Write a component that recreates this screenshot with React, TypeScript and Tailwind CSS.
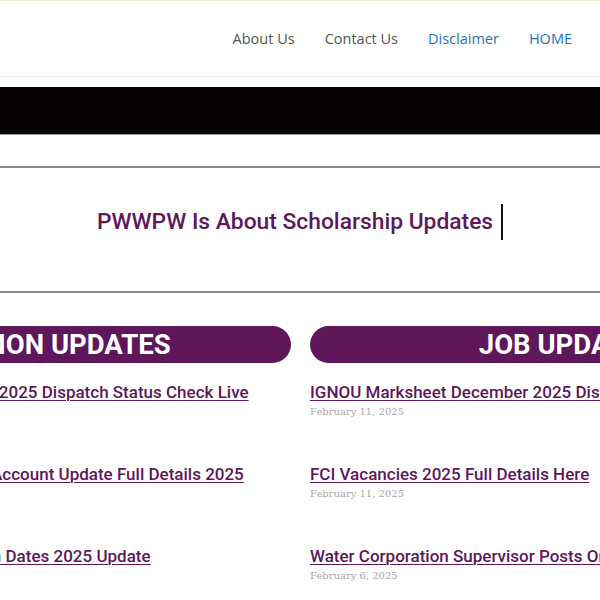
import React from 'react';

const NAV = [
  { label: 'About Us', active: false },
  { label: 'Contact Us', active: false },
  { label: 'Disclaimer', active: true },
  { label: 'HOME', active: true },
];

const LEFT_POSTS = [
  { title: 'NSP Scholarship Certificates 2025 Dispatch Status Check Live', date: 'February 12, 2025' },
  { title: 'PFMS Scholarship MP Bank Account Update Full Details 2025', date: 'February 11, 2025' },
  { title: 'NSP Scholarships Application Dates 2025 Update', date: 'February 8, 2025' },
];

const RIGHT_POSTS = [
  { title: 'IGNOU Marksheet December 2025 Dispatch Status', date: 'February 11, 2025' },
  { title: 'FCI Vacancies 2025 Full Details Here', date: 'February 11, 2025' },
  { title: 'Water Corporation Supervisor Posts Online Form', date: 'February 6, 2025' },
];

type Post = { title: string; date: string };

function Column({ heading, posts }: { heading: string; posts: Post[] }) {
  return (
    <div className="w-[516px] shrink-0">
      <div className="h-[37px] rounded-full bg-[#5e175b] flex items-center justify-center">
        <span className="text-white text-[27.5px] font-bold leading-none">{heading}</span>
      </div>
      <ul className="mt-[17px]">
        {posts.map((p) => (
          <li key={p.title} className="h-[82px]">
            <a href="#" className="whitespace-nowrap text-[17px] font-medium leading-[24px] text-[#5e175b] underline decoration-1 underline-offset-2">
              {p.title}
            </a>
            <div className="text-[10px] leading-[14px] text-[#a8a8a8] font-['DejaVu_Serif',serif]">{p.date}</div>
          </li>
        ))}
      </ul>
    </div>
  );
}

export default function App() {
  return (
    <div className="w-[600px] h-[600px] overflow-hidden bg-white font-['Roboto',sans-serif]">
      <div className="h-px bg-[#efe7d6]" />
      <header className="h-[76px] border-b border-[#ececec] flex items-center justify-end pr-[28px] gap-[30px] font-['Open_Sans',sans-serif] text-[14.5px]">
        {NAV.map((n) => (
          <a key={n.label} href="#" className={n.active ? 'text-[#1e73be]' : 'text-[#555555]'}>
            {n.label}
          </a>
        ))}
      </header>

      <div className="mt-[10px] h-[48px] bg-[#070203] border-b border-[#9a9a9a]" />

      <div className="mt-[31px] border-t-2 border-[#8c8c8c]" />
      <section className="h-[123px] pt-[36px] flex justify-center">
        <div className="flex items-center h-[36px]">
          <span className="text-[22.8px] font-medium text-[#5e175b]">PWWPW Is About Scholarship Updates</span>
          <span className="ml-[8px] w-[2px] h-[36px] bg-[#111]" />
        </div>
      </section>
      <div className="border-t-2 border-[#8c8c8c]" />

      <div className="mt-[33px] ml-[-225px] flex gap-[19px]">
        <Column heading="ADMISSION UPDATES" posts={LEFT_POSTS} />
        <Column heading="JOB UPDATES" posts={RIGHT_POSTS} />
      </div>
    </div>
  );
}
